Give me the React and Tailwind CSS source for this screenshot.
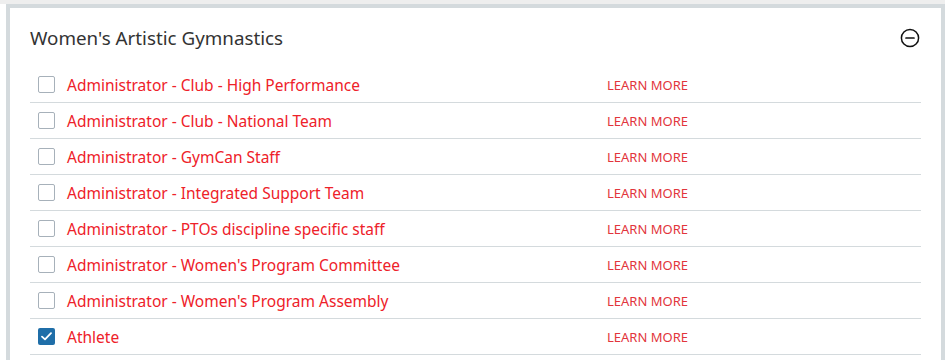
import React from "react";

const items = [
  { label: "Administrator - Club - High Performance", checked: false },
  { label: "Administrator - Club - National Team", checked: false },
  { label: "Administrator - GymCan Staff", checked: false },
  { label: "Administrator - Integrated Support Team", checked: false },
  { label: "Administrator - PTOs discipline specific staff", checked: false },
  { label: "Administrator - Women's Program Committee", checked: false },
  { label: "Administrator - Women's Program Assembly", checked: false },
  { label: "Athlete", checked: true },
];

function Checkbox({ checked }) {
  if (checked) {
    return (
      <span className="flex h-[17px] w-[17px] shrink-0 items-center justify-center rounded-[2px] bg-[#1f6ea8]">
        <svg width="11" height="9" viewBox="0 0 11 9" fill="none">
          <path d="M1 4.6 L4 7.4 L10 1.2" stroke="white" strokeWidth="1.8" strokeLinecap="round" strokeLinejoin="round" />
        </svg>
      </span>
    );
  }
  return <span className="block h-[17px] w-[17px] shrink-0 rounded-[2px] border border-[#a7b1ba] bg-white" />;
}

export default function App() {
  return (
    <div className="h-[360px] w-[945px] overflow-hidden border-t-4 border-[#eeeeee] bg-white" style={{ fontFamily: '"Noto Sans", "Open Sans", sans-serif' }}>
      <div className="ml-[6px] h-[400px] border-x-4 border-t-4 border-[#d4dadd] bg-white">
        <div className="flex items-center justify-between px-5 pt-[18px] pb-[17px]">
          <h2 className="text-[18.8px] leading-[24px] text-[#333333]">Women's Artistic Gymnastics</h2>
          <svg width="20" height="20" viewBox="0 0 20 20" fill="none" className="mr-[1px]">
            <circle cx="10" cy="10" r="8.6" stroke="#111" strokeWidth="1.5" />
            <path d="M6 10 H14" stroke="#111" strokeWidth="1.7" strokeLinecap="round" />
          </svg>
        </div>
        <div className="mx-5">
          {items.map((it) => (
            <div key={it.label} className="flex h-[36px] items-center border-b border-[#d4dadd] pl-2">
              <Checkbox checked={it.checked} />
              <span className="ml-3 w-[540px] text-[15.5px] leading-[20px] text-[#ee2129]">{it.label}</span>
              <span className="text-[13px] leading-[18px] text-[#e2353c]">LEARN MORE</span>
            </div>
          ))}
        </div>
      </div>
    </div>
  );
}
